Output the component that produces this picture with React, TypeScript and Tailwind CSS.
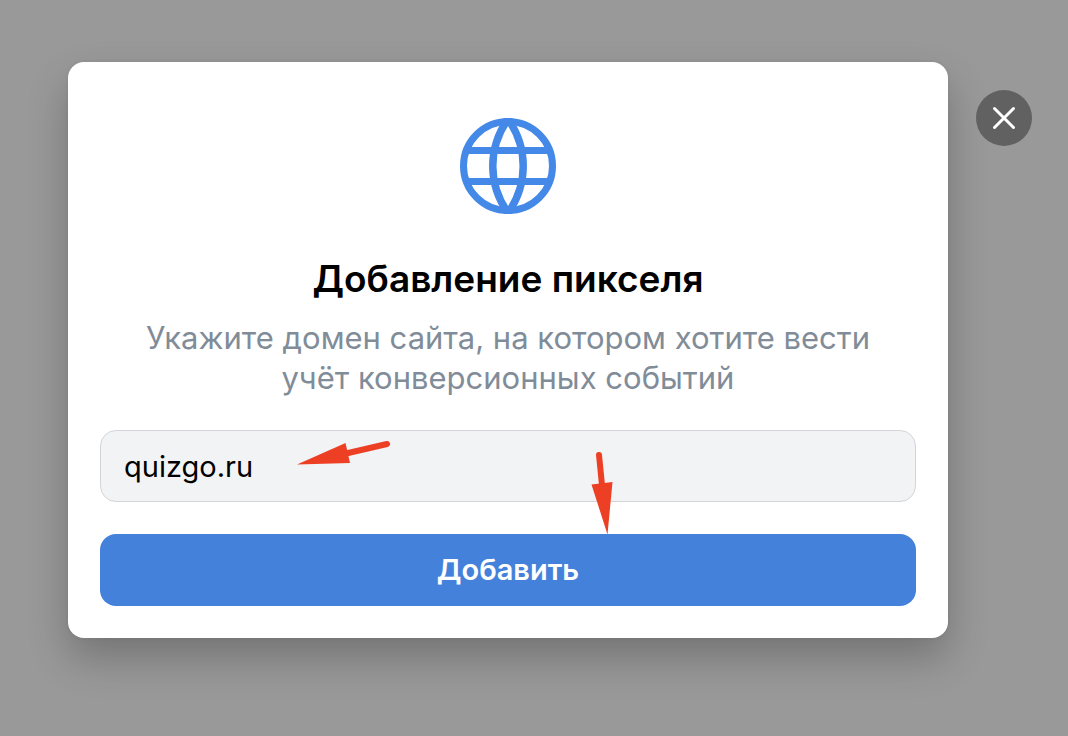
import { useState } from 'react'

const GlobeIcon = () => (
    <svg width="96" height="96" viewBox="0 0 96 96" fill="none" stroke="#4489e8" strokeWidth="7" aria-hidden="true">
        <circle cx="48" cy="48" r="44.5" />
        <path d="M8 32.5h80M8 63.5h80" />
        <path d="M48 1C27.7 30 27.7 66 48 95M48 1C68.3 30 68.3 66 48 95" strokeWidth="7.5" />
    </svg>
)

const CloseIcon = () => (
    <svg width="24" height="24" viewBox="0 0 24 24" stroke="white" strokeWidth="3" strokeLinecap="round" aria-hidden="true">
        <path d="M2.5 2.5l19 19M21.5 2.5l-19 19" />
    </svg>
)

export default function App() {
    const [domain, setDomain] = useState('quizgo.ru')

    return (
        <main className="flex min-h-screen items-start bg-[#999999] py-[62px] pr-9 pl-[68px] font-[Inter,sans-serif]">
            <section
                role="dialog"
                aria-labelledby="title"
                className="flex-1 rounded-2xl bg-white px-8 pt-14 pb-8 shadow-[0_0_4px_rgba(0,0,0,0.06),0_20px_40px_rgba(0,0,0,0.24)]"
            >
                <div className="flex flex-col items-center px-8 text-center">
                    <GlobeIcon />
                    <h1 id="title" className="mt-10 text-[37px] leading-[50px] font-semibold text-black">
                        Добавление пикселя
                    </h1>
                    <p className="mt-[14px] text-[31px] leading-10 text-[#818c99]">
                        Укажите домен сайта, на котором хотите вести учёт конверсионных событий
                    </p>
                </div>

                <form className="mt-8" onSubmit={(e) => e.preventDefault()}>
                    <div className="relative">
                        <input
                            type="text"
                            aria-label="Домен сайта"
                            value={domain}
                            onChange={(e) => setDomain(e.target.value)}
                            className="block h-18 w-full rounded-2xl border border-[#d3d5d8] bg-[#f2f3f5] px-[23px] text-[29px] text-black outline-none"
                        />
                        {/* hint arrows drawn over the form */}
                        <svg className="pointer-events-none absolute top-2 left-49" width="96" height="32" viewBox="196 8 96 32" aria-hidden="true">
                            <path d="M287 14L246 23.5" stroke="#ed3f24" strokeWidth="6" strokeLinecap="round" />
                            <path d="M197 34.5L245.5 13L250 33Z" fill="#ed3f24" />
                        </svg>
                        <svg className="pointer-events-none absolute top-5 left-122" width="28" height="88" viewBox="488 20 28 88" aria-hidden="true">
                            <path d="M499 25L502 55" stroke="#ed3f24" strokeWidth="6" strokeLinecap="round" />
                            <path d="M507.5 104.5L491.5 54.5L512.5 52Z" fill="#ed3f24" />
                        </svg>
                    </div>
                    <button type="submit" className="mt-8 h-18 w-full rounded-2xl bg-[#4481db] text-[29px] font-semibold text-white">
                        Добавить
                    </button>
                </form>
            </section>

            <button type="button" aria-label="Закрыть" className="mt-7 ml-7 flex size-14 items-center justify-center rounded-full bg-[#616161]">
                <CloseIcon />
            </button>
        </main>
    )
}
